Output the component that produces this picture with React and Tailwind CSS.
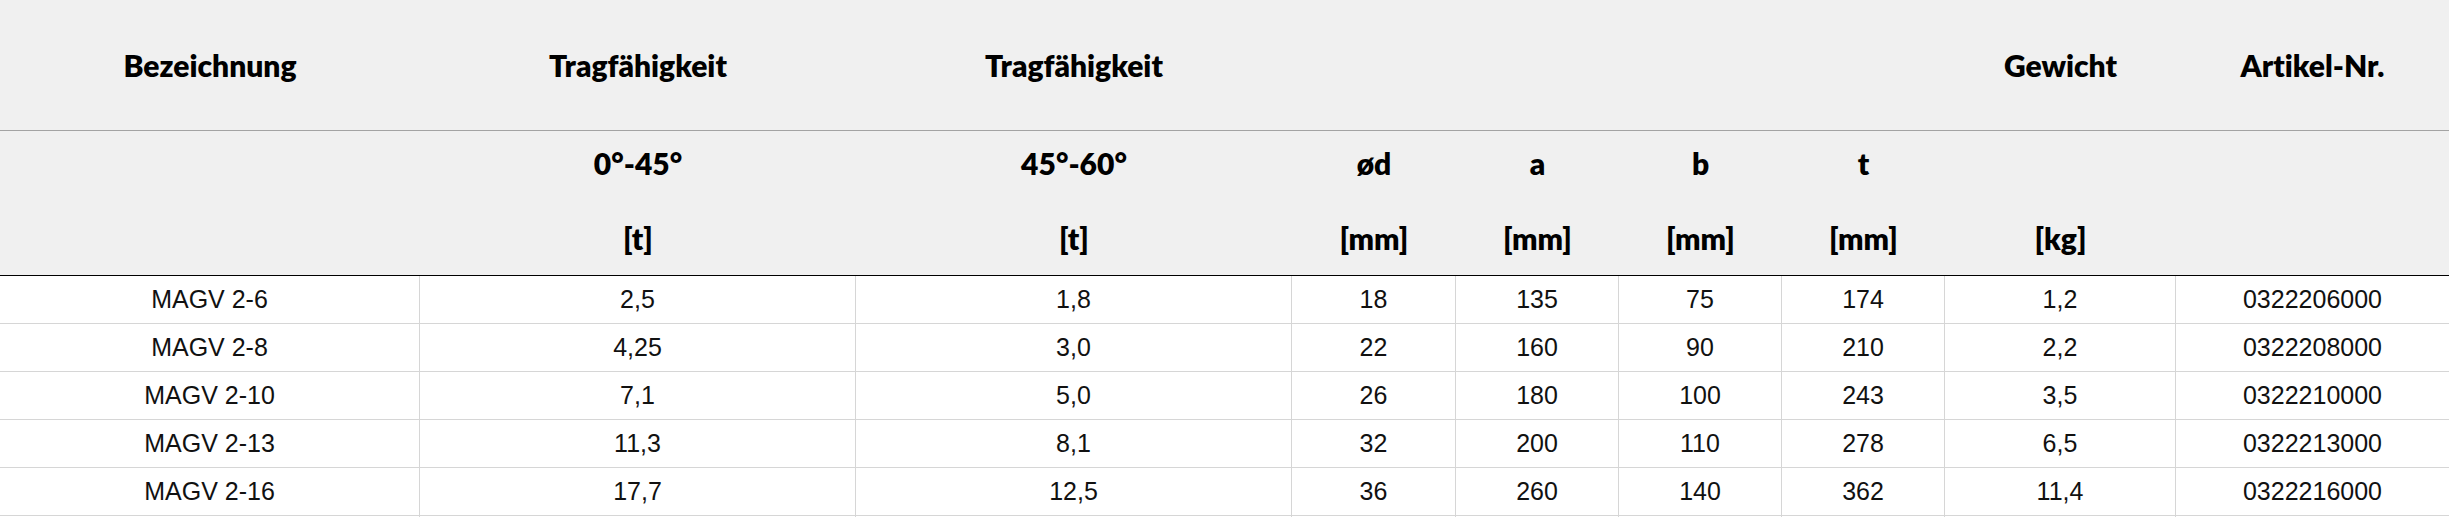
import React from "react";

const GRID =
  "grid grid-cols-[420px_436px_436px_164px_163px_163px_163px_231px_273px]";

const head1 = ["Bezeichnung", "Tragfähigkeit", "Tragfähigkeit", "", "", "", "", "Gewicht", "Artikel-Nr."];
const head2a = ["", "0°-45°", "45°-60°", "ød", "a", "b", "t", "", ""];
const head2b = ["", "[t]", "[t]", "[mm]", "[mm]", "[mm]", "[mm]", "[kg]", ""];

const rows = [
  ["MAGV 2-6", "2,5", "1,8", "18", "135", "75", "174", "1,2", "0322206000"],
  ["MAGV 2-8", "4,25", "3,0", "22", "160", "90", "210", "2,2", "0322208000"],
  ["MAGV 2-10", "7,1", "5,0", "26", "180", "100", "243", "3,5", "0322210000"],
  ["MAGV 2-13", "11,3", "8,1", "32", "200", "110", "278", "6,5", "0322213000"],
  ["MAGV 2-16", "17,7", "12,5", "36", "260", "140", "362", "11,4", "0322216000"],
  ["", "", "", "", "", "", "", "", ""],
];

export default function App() {
  return (
    <div className="w-[2449px] bg-white text-black">
      <div className="bg-[#f0f0f0] font-['Lato',sans-serif] font-extrabold text-[30px] [font-variant-ligatures:none]">
        <div className={`${GRID} h-[131px] border-b border-[#a3a3a3]`}>
          {head1.map((t, i) => (
            <div key={i} className="flex items-center justify-center leading-[40px]">
              {t}
            </div>
          ))}
        </div>
        <div className={`${GRID} h-[145px] border-b border-black`}>
          {head2a.map((t, i) => (
            <div key={i} className="flex flex-col items-center pt-[12px] gap-[35px]">
              <div className="h-[40px] leading-[40px]">{t}</div>
              <div className="h-[40px] leading-[40px]">{head2b[i]}</div>
            </div>
          ))}
        </div>
      </div>
      <div className="font-['Liberation_Sans',Arial,sans-serif] text-[25px] text-[#111]">
        {rows.map((r, ri) => (
          <div key={ri} className={`${GRID} h-[48px]`}>
            {r.map((c, ci) => (
              <div
                key={ci}
                className={`flex items-center justify-center border-b border-[#d6d6d6] ${
                  ci < r.length - 1 ? "border-r" : ""
                }`}
              >
                {c}
              </div>
            ))}
          </div>
        ))}
      </div>
    </div>
  );
}
